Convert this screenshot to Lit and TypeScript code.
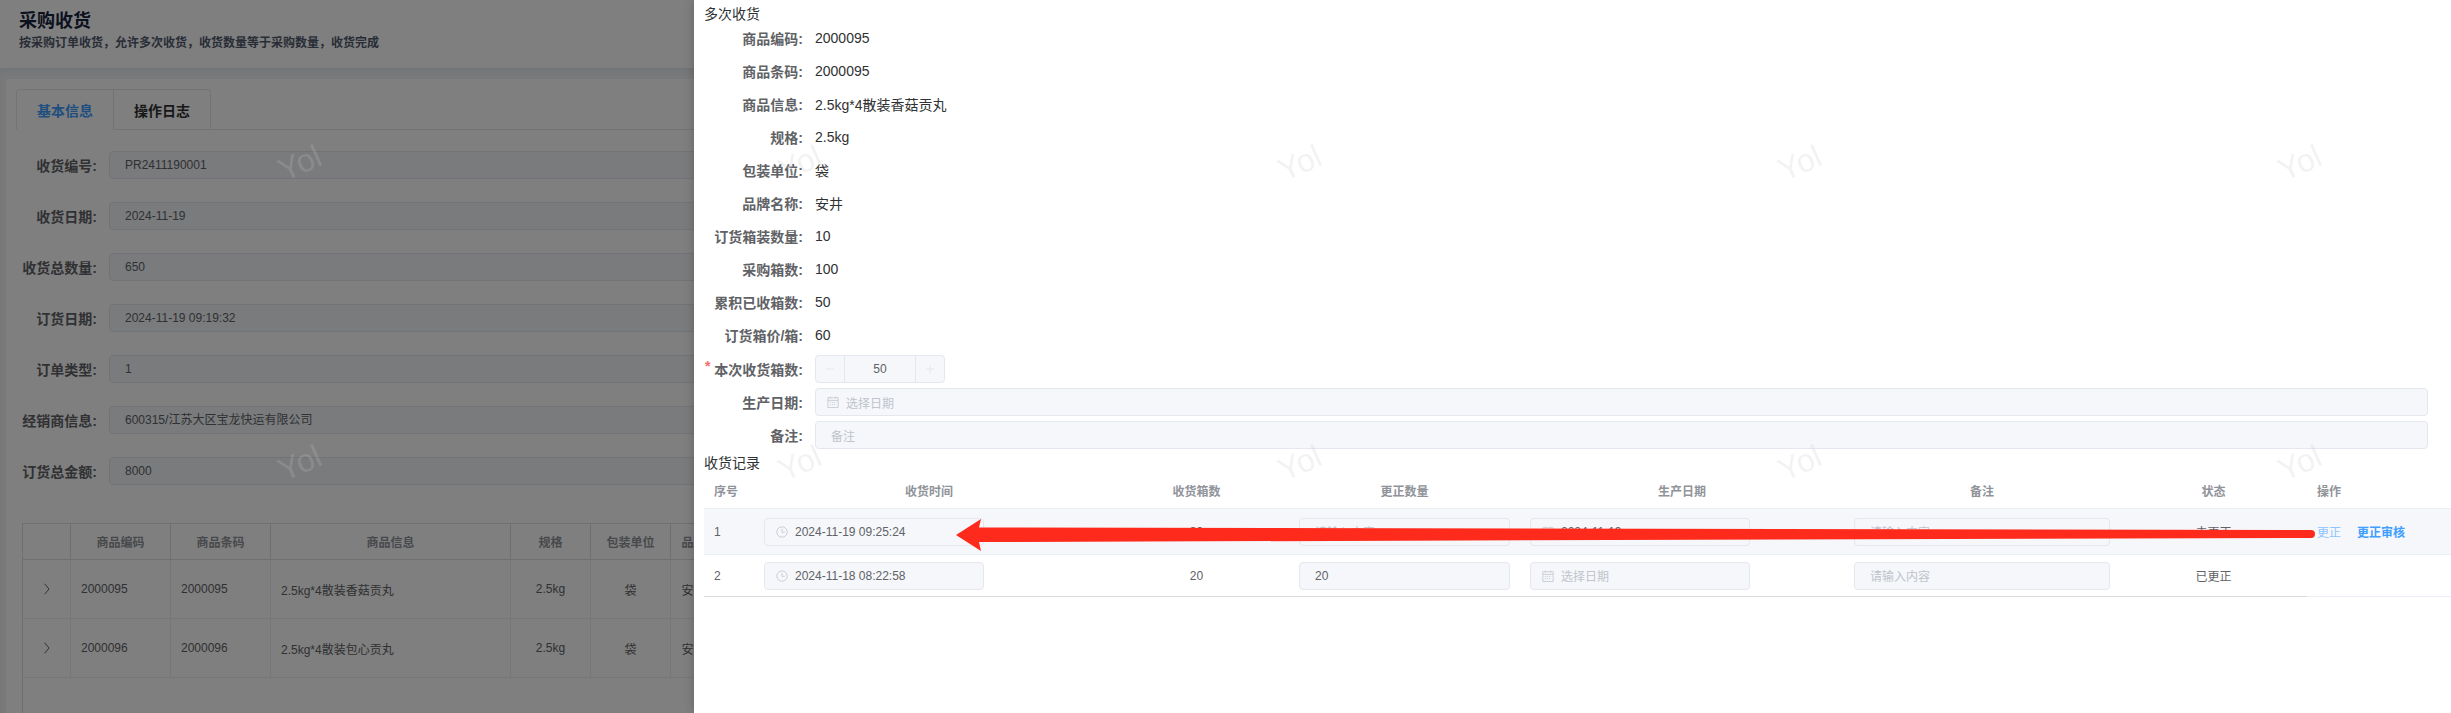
import { LitElement, html, css, svg } from "lit";
import { customElement } from "lit/decorators.js";

const clock = svg`<svg class="ic" width="12" height="12" viewBox="0 0 12 12" fill="none" stroke="#c6cad2" stroke-width=".9"><circle cx="6" cy="6" r="5.2"/><path d="M6 2.8V6.3H8.8"/></svg>`;
const calendar = svg`<svg class="ic" width="12" height="12" viewBox="0 0 12 12" fill="none" stroke="#c6cad2" stroke-width=".9"><rect x=".9" y="1.8" width="10.2" height="9.6"/><path d="M.9 4.4H11.1M3.3.6V2.4M8.7.6V2.4"/><path d="M2.8 6.4H9.2M2.8 8.6H9.2" stroke-dasharray="1.1 1"/></svg>`;

const pageFields: [string, string][] = [
  ["收货编号:", "PR2411190001"],
  ["收货日期:", "2024-11-19"],
  ["收货总数量:", "650"],
  ["订货日期:", "2024-11-19 09:19:32"],
  ["订单类型:", "1"],
  ["经销商信息:", "600315/江苏大区宝龙快运有限公司"],
  ["订货总金额:", "8000"],
];
const infoFields: [string, string][] = [
  ["商品编码:", "2000095"],
  ["商品条码:", "2000095"],
  ["商品信息:", "2.5kg*4散装香菇贡丸"],
  ["规格:", "2.5kg"],
  ["包装单位:", "袋"],
  ["品牌名称:", "安井"],
  ["订货箱装数量:", "10"],
  ["采购箱数:", "100"],
  ["累积已收箱数:", "50"],
  ["订货箱价/箱:", "60"],
];
const products = [
  ["2000095", "2.5kg*4散装香菇贡丸"],
  ["2000096", "2.5kg*4散装包心贡丸"],
];

@customElement("app-root")
export class AppRoot extends LitElement {
  static styles = css`
    :host {
      display: block;
      position: relative;
      width: 2451px;
      height: 713px;
      overflow: hidden;
      background: #fff;
      font-family: "Liberation Sans", "Noto Sans CJK SC", sans-serif;
      font-size: 12px;
      color: #606266;
    }
    .page { height: 713px; display: flex; flex-direction: column; }
    .page-head { height: 68px; box-sizing: border-box; padding: 10px 20px 0 19px; }
    .page-head h1 { margin: 0; font-size: 18px; line-height: 22px; font-weight: 700; color: #17233d; }
    .page-head p { margin: 1px 0 0; font-size: 12px; line-height: 20px; font-weight: 700; color: #515a6e; }
    .page-body { flex: 1; background: #f0f2f5; padding: 11px 0 0 6px; display: flex; box-shadow: inset 0 4px 4px rgba(0, 0, 0, 0.03); }
    .card { flex: 1; background: #fff; border-radius: 4px 0 0 0; padding: 10px 0 0 10px; }
    .tabs { display: flex; height: 41px; box-sizing: border-box; border-bottom: 1px solid #e4e7ed; }
    .tab {
      width: 97px; height: 41px; box-sizing: border-box; border: 1px solid #e4e7ed; border-left: 0;
      display: flex; align-items: center; justify-content: center;
      font-size: 14px; font-weight: 700; color: #303133;
    }
    .tab.first { width: 98px; border-left: 1px solid #e4e7ed; border-radius: 4px 0 0 0; border-bottom-color: #fff; color: #409eff; }
    .tab.last { border-radius: 0 4px 0 0; }
    .page-form { padding-top: 21px; width: 1200px; display: flex; flex-direction: column; gap: 23px; }
    .pf-row { display: flex; align-items: center; height: 28px; }
    .pf-label { width: 81px; margin-right: 12px; text-align: right; font-size: 14px; font-weight: 700; color: #606266; white-space: nowrap; }
    .pf-input {
      flex: 1; height: 28px; box-sizing: border-box; background: #f5f7fa; border: 1px solid #e4e7ed; border-radius: 4px;
      padding: 0 15px; line-height: 26px; color: #606266;
    }
    .ptable { margin: 38px 0 0 6px; width: 1400px; height: 190px; box-sizing: border-box; border: 1px solid #dcdfe6; border-bottom: 0; }
    .ptr { display: grid; grid-template-columns: 48px 100px 100px 240px 80px 80px 46px; border-bottom: 1px solid #ebeef5; height: 59px; box-sizing: border-box; }
    .ptr.head { height: 36px; border-bottom-color: #dcdfe6; font-weight: 700; color: #909399; }
    .ptr > div { border-right: 1px solid #ebeef5; display: flex; align-items: center; padding: 0 10px; white-space: nowrap; overflow: hidden; min-width: 0; }
    .ptr.head > div { justify-content: center; border-right-color: #dcdfe6; }
    .ptr > div.c { justify-content: center; padding: 0; }

    .mask { position: absolute; inset: 0; background: rgba(0, 0, 0, 0.5); }
    .drawer {
      position: absolute; top: 0; right: 0; bottom: 0; width: 1757px; box-sizing: border-box;
      background: #fff; padding: 4px 0 0 10px; box-shadow: 0 0 10px rgba(0, 0, 0, 0.22);
      color: #303133;
    }
    .sec { font-size: 14px; line-height: 20px; color: #303133; }
    .d-form { display: flex; flex-direction: column; gap: 5px; margin-bottom: 4px; padding-right: 23px; }
    .d-row { display: flex; align-items: center; height: 28px; }
    .d-row.after-info { margin-top: 1px; }
    .d-label { width: 99px; box-sizing: border-box; margin-right: 12px; flex: none; text-align: right; font-size: 14px; font-weight: 700; color: #606266; white-space: nowrap; position: relative; }
    .star { color: #f56c6c; position: absolute; left: 1px; top: -1px; font-weight: 700; }
    .d-value { font-size: 14px; color: #303133; }
    .box {
      height: 28px; box-sizing: border-box; background: #f5f7fa; border: 1px solid #e4e7ed; border-radius: 4px;
      display: flex; align-items: center; color: #606266; font-size: 12px; white-space: nowrap; overflow: hidden;
    }
    .grow { flex: 1; }
    .pad { padding-left: 15px; }
    .ipad { padding-left: 11px; }
    .ic { margin-right: 7px; flex: none; display: block; }
    .ph { color: #c0c4cc; }
    .num { width: 130px; }
    .num .btn { width: 28px; height: 26px; flex: none; display: flex; align-items: center; justify-content: center; }
    .num .btn.minus { border-right: 1px solid #e4e7ed; }
    .num .btn.plus { border-left: 1px solid #e4e7ed; }
    .num .val { flex: 1; text-align: center; color: #606266; }
    .t-row { display: grid; grid-template-columns: 50px 350px 185px 231px 324px 276px 187px 144px; border-bottom: 1px solid #ebeef5; box-sizing: border-box; }
    .t-row > div { display: flex; align-items: center; padding: 0 10px; white-space: nowrap; color: #606266; min-width: 0; }
    .t-row > div.c { justify-content: center; }
    .t-row.head { height: 36px; }
    .t-row.head > div { font-weight: 700; color: #909399; }
    .t-row.r1 { height: 46px; background: #f5f7fa; }
    .t-row.r2 { height: 42px; border-bottom: 0; }
    .t-row.r2 > div { border-bottom: 1px solid #d9d9d9; }
    .t-row.r2 > div:last-child { border-bottom-color: #ebeef5; }
    .w220 { width: 220px; }
    .fill { width: 100%; }
    .link { color: #409eff; font-weight: 700; }
    .link.off { color: #8cc5ff; font-weight: 400; margin-right: 16px; }

    .marks {
      position: absolute; inset: 0; pointer-events: none; box-sizing: border-box; padding: 13px 0 0 50px;
      display: grid; grid-template-columns: repeat(5, 500px); grid-auto-rows: 300px;
    }
    .mark { display: flex; align-items: center; justify-content: center; }
    .mark span { font-size: 32px; line-height: 1; color: rgba(200, 200, 200, 0.22); transform: rotate(-24deg); font-family: "Liberation Sans", sans-serif; }
    .arrow { position: absolute; left: 0; top: 0; pointer-events: none; display: block; }
  `;

  render() {
    return html`
      <div class="page">
        <div class="page-head">
          <h1>采购收货</h1>
          <p>按采购订单收货，允许多次收货，收货数量等于采购数量，收货完成</p>
        </div>
        <div class="page-body">
          <div class="card">
            <div class="tabs"><div class="tab first">基本信息</div><div class="tab last">操作日志</div></div>
            <div class="page-form">
              ${pageFields.map(([l, v]) => html`<div class="pf-row"><div class="pf-label">${l}</div><div class="pf-input">${v}</div></div>`)}
            </div>
            <div class="ptable">
              <div class="ptr head">
                <div></div><div>商品编码</div><div>商品条码</div><div>商品信息</div><div>规格</div><div>包装单位</div><div>品牌</div>
              </div>
              ${products.map(([code, info]) => html`
                <div class="ptr">
                  <div class="c"><svg width="6" height="12" viewBox="0 0 6 12" fill="none" stroke="#606266" stroke-width="1"><path d="M.7 .8L5 6 .7 11.2"/></svg></div>
                  <div>${code}</div><div>${code}</div><div>${info}</div>
                  <div class="c">2.5kg</div><div class="c">袋</div><div class="c">安井</div>
                </div>`)}
            </div>
          </div>
        </div>
      </div>
      <div class="mask"></div>
      <div class="drawer">
        <div class="sec">多次收货</div>
        <div class="d-form">
          ${infoFields.map(([l, v]) => html`<div class="d-row"><div class="d-label">${l}</div><div class="d-value">${v}</div></div>`)}
          <div class="d-row after-info">
            <div class="d-label"><span class="star">*</span>本次收货箱数:</div>
            <div class="box num">
              <div class="btn minus"><svg width="8" height="8" viewBox="0 0 8 8" stroke="#e4e7ed" stroke-width="1"><path d="M0 4H8"/></svg></div>
              <div class="val">50</div>
              <div class="btn plus"><svg width="8" height="8" viewBox="0 0 8 8" stroke="#e4e7ed" stroke-width="1"><path d="M0 4H8M4 0V8"/></svg></div>
            </div>
          </div>
          <div class="d-row"><div class="d-label">生产日期:</div><div class="box grow ipad">${calendar}<span class="ph">选择日期</span></div></div>
          <div class="d-row"><div class="d-label">备注:</div><div class="box grow pad"><span class="ph">备注</span></div></div>
        </div>
        <div class="sec">收货记录</div>
        <div class="t-row head">
          <div>序号</div><div class="c">收货时间</div><div class="c">收货箱数</div><div class="c">更正数量</div>
          <div class="c">生产日期</div><div class="c">备注</div><div class="c">状态</div><div>操作</div>
        </div>
        <div class="t-row r1">
          <div>1</div>
          <div><div class="box w220 ipad">${clock}2024-11-19 09:25:24</div></div>
          <div class="c">30</div>
          <div><div class="box fill pad"><span class="ph">请输入内容</span></div></div>
          <div><div class="box w220 ipad">${calendar}2024-11-19</div></div>
          <div><div class="box fill pad"><span class="ph">请输入内容</span></div></div>
          <div class="c">未更正</div>
          <div><span class="link off">更正</span><span class="link">更正审核</span></div>
        </div>
        <div class="t-row r2">
          <div>2</div>
          <div><div class="box w220 ipad">${clock}2024-11-18 08:22:58</div></div>
          <div class="c">20</div>
          <div><div class="box fill pad">20</div></div>
          <div><div class="box w220 ipad">${calendar}<span class="ph">选择日期</span></div></div>
          <div><div class="box fill pad"><span class="ph">请输入内容</span></div></div>
          <div class="c">已更正</div>
          <div></div>
        </div>
      </div>
      <div class="marks">
        ${Array.from({ length: 10 }, () => html`<div class="mark"><span>Yol</span></div>`)}
      </div>
      <svg class="arrow" width="2451" height="713" viewBox="0 0 2451 713">
        <path fill="#fe2a1c" d="M956 535 L981 519 L979 527.5 L2311 530 A4 4 0 0 1 2311 538 L979 542 L981 551 Z"/>
      </svg>
    `;
  }
}
